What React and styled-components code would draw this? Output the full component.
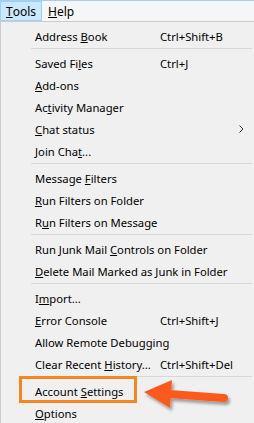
import React from 'react';
import styled, { createGlobalStyle } from 'styled-components';

const GlobalStyle = createGlobalStyle`
  body {
    margin: 0;
    background: #f0f0f0;
    font-family: "Noto Sans", "Liberation Sans", sans-serif;
    font-size: 11.25px;
    color: #000;
  }
`;

const Window = styled.div`
  width: 254px;
  height: 423px;
  overflow: hidden;
  box-sizing: border-box;
  border-top: 1px solid #aacde9;
  background: #f0f0f0;
`;

const MenuBar = styled.div`
  display: flex;
  height: 20px;
  background: #f5f6f7;
`;

const MenuBarItem = styled.div`
  display: flex;
  align-items: center;
  padding: 0 5px;
  border: 1px solid ${(p) => (p.$active ? '#99d1ff' : 'transparent')};
  background: ${(p) => (p.$active ? '#cce8ff' : 'transparent')};
  box-sizing: border-box;
  height: 20px;
  font-size: 12px;
`;

const Dropdown = styled.div`
  border-top: 1px solid #cccccc;
  border-left: 1px solid #cccccc;
  background: #f0f0f0;
  padding-top: 3px;
`;

const Row = styled.div`
  position: relative;
  display: flex;
  align-items: center;
  height: 22px;
  padding-left: 34px;
  white-space: nowrap;
`;

const Label = styled.span`
  min-width: 125px;
`;

const Shortcut = styled.span``;

const SubArrow = styled.svg`
  margin-left: auto;
  margin-right: 10px;
`;

const Separator = styled.div`
  height: 1px;
  margin: 1px 2px 3px 30px;
  background: #d7d7d7;
`;

const Callout = styled.div`
  position: absolute;
  left: 18px;
  top: -4px;
  width: 118px;
  height: 27px;
  box-sizing: border-box;
  border: 3px solid #f7861f;
  pointer-events: none;
`;

const Pointer = styled.svg`
  position: absolute;
  left: 140px;
  top: -4px;
  overflow: visible;
`;

const items = [
  { label: ['Address ', 'B', 'ook'], key: 'Ctrl+Shift+B' },
  'sep',
  { label: ['Saved Fi', 'l', 'es'], key: 'Ctrl+J' },
  { label: ['', 'A', 'dd-ons'] },
  { label: ['Ac', 't', 'ivity Manager'] },
  { label: ['', 'C', 'hat status'], sub: true },
  { label: ['Join Cha', 't', '...'] },
  'sep',
  { label: ['Message ', 'F', 'ilters'] },
  { label: ['', 'R', 'un Filters on Folder'] },
  { label: ['R', 'u', 'n Filters on Message'] },
  'sep',
  { label: ['Run Junk Mail ', 'C', 'ontrols on Folder'] },
  { label: ['', 'D', 'elete Mail Marked as Junk in Folder'] },
  'sep',
  { label: ['I', 'm', 'port...'] },
  { label: ['', 'E', 'rror Console'], key: 'Ctrl+Shift+J' },
  { label: ['Allow Remote Debugging', '', ''] },
  { label: ['Clear Recent ', 'H', 'istory...'], key: 'Ctrl+Shift+Del' },
  'sep',
  { label: ['Account ', 'S', 'ettings'], marked: true },
  { label: ['', 'O', 'ptions'] },
];

const Arrow = () => (
  <Pointer width="92" height="36" viewBox="0 0 92 36">
    <defs>
      <filter id="sh" x="-20%" y="-40%" width="150%" height="200%">
        <feDropShadow dx="2" dy="3" stdDeviation="1.8" floodColor="#000" floodOpacity="0.35" />
      </filter>
    </defs>
    <g filter="url(#sh)" fill="#fc5a1c">
      <line x1="28" y1="18" x2="83" y2="22" stroke="#fc5a1c" strokeWidth="8" strokeLinecap="round" />
      <polygon points="3,16 31,4 29,32" />
    </g>
  </Pointer>
);

export default function App() {
  return (
    <Window>
      <GlobalStyle />
      <MenuBar>
        <MenuBarItem $active><u>T</u>ools</MenuBarItem>
        <MenuBarItem><u>H</u>elp</MenuBarItem>
      </MenuBar>
      <Dropdown>
        {items.map((it, i) =>
          it === 'sep' ? (
            <Separator key={i} />
          ) : (
            <Row key={i}>
              <Label>
                {it.label[0]}
                {it.label[1] && <u>{it.label[1]}</u>}
                {it.label[2]}
              </Label>
              {it.key && <Shortcut>{it.key}</Shortcut>}
              {it.sub && (
                <SubArrow width="5" height="8" viewBox="0 0 5 8">
                  <path d="M0.5 0.5 L4 4 L0.5 7.5" fill="none" stroke="#333" strokeWidth="1" />
                </SubArrow>
              )}
              {it.marked && (
                <>
                  <Callout />
                  <Arrow />
                </>
              )}
            </Row>
          )
        )}
      </Dropdown>
    </Window>
  );
}
